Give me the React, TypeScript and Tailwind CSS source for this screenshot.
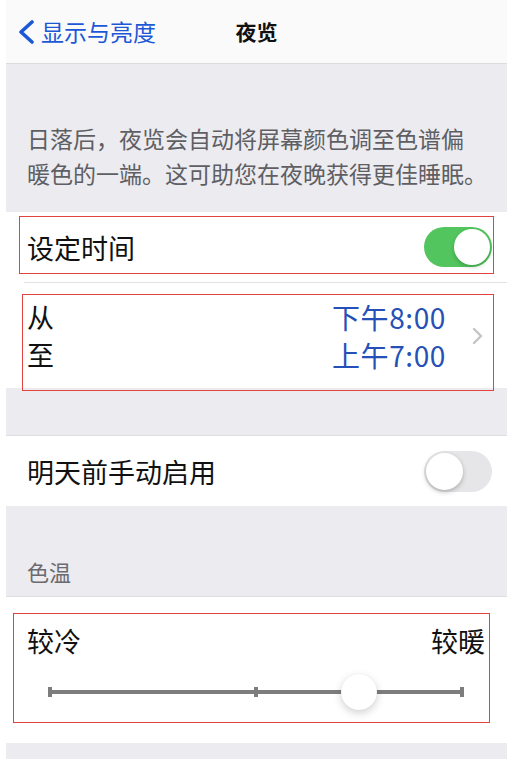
import React from "react";

function ToggleOn() {
  return (
    <div className="flex h-[40px] w-[68px] items-center justify-end rounded-full bg-[#52c55e] p-[2px]">
      <div className="h-[36px] w-[36px] rounded-full bg-white shadow-[0_2px_4px_rgba(0,0,0,0.2)]" />
    </div>
  );
}

function ToggleOff() {
  return (
    <div className="flex h-[41px] w-[68px] items-center justify-start rounded-full bg-[#e6e6e8] p-[2px]">
      <div className="h-[37px] w-[37px] rounded-full bg-white shadow-[0_2px_5px_rgba(0,0,0,0.25)]" />
    </div>
  );
}

export default function App() {
  return (
    <div className="flex h-[759px] w-[507px] overflow-hidden bg-white pl-[6px] font-['Noto_Sans_CJK_SC','Noto_Sans',sans-serif] text-[#111]">
      <div className="flex flex-1 flex-col bg-[#ebebf0]">
        {/* Nav bar */}
        <div className="grid h-[64px] grid-cols-[1fr_auto_1fr] items-center border-b border-[#dcdce0] bg-[#fafafa]">
          <div className="flex items-center pl-[11px] text-[#1c58d6]">
            <svg width="18" height="24" viewBox="0 0 18 24" className="mr-[6px]">
              <path d="M15 2 L4 12 L15 22" fill="none" stroke="#1c58d6" strokeWidth="3.6" strokeLinecap="round" strokeLinejoin="round" />
            </svg>
            <span className="text-[23px] leading-none">显示与亮度</span>
          </div>
          <div className="text-[21px] font-bold leading-none">夜览</div>
          <div />
        </div>

        {/* Description */}
        <div className="h-[148px] pl-[21px] pt-[57px] text-[23px] leading-[35px] text-[#5e5e63]">
          <div>日落后，夜览会自动将屏幕颜色调至色谱偏</div>
          <div>暖色的一端。这可助您在夜晚获得更佳睡眠。</div>
        </div>

        {/* Schedule section */}
        <div className="relative bg-white">
          <div className="flex h-[70px] items-center justify-between pl-[21px] pr-[15px]">
            <span className="text-[27px] leading-none">设定时间</span>
            <ToggleOn />
          </div>
          <div className="ml-[18px] h-px bg-[#e2e2e4]" />
          <div className="flex h-[105px] items-center pl-[21px] pr-[24px]">
            <div className="flex-1 text-[27px] leading-[38px]">
              <div>从</div>
              <div>至</div>
            </div>
            <div className="text-right text-[28px] leading-[38px] tracking-[0.6px] text-[#2450b8]">
              <div>下午8:00</div>
              <div>上午7:00</div>
            </div>
            <svg width="11" height="18" viewBox="0 0 11 18" className="ml-[26px]">
              <path d="M2 2 L9 9 L2 16" fill="none" stroke="#c4c4c8" strokeWidth="2.4" strokeLinecap="round" strokeLinejoin="round" />
            </svg>
          </div>
          <div className="pointer-events-none absolute left-[13px] top-[4px] h-[58px] w-[475px] border-[1.5px] border-[#e2433f]" />
          <div className="pointer-events-none absolute left-[16px] top-[82px] h-[97px] w-[472px] border-[1.5px] border-[#e2433f]" />
        </div>

        <div className="h-[48px] border-b border-[#dedee2]" />

        {/* Manual enable */}
        <div className="flex h-[70px] items-center justify-between bg-white pl-[21px] pr-[15px]">
          <span className="text-[27px] leading-none">明天前手动启用</span>
          <ToggleOff />
        </div>

        {/* Color temp header */}
        <div className="flex h-[91px] items-end border-b border-[#dedee2] pb-[10px] pl-[21px]">
          <span className="text-[22px] leading-[30px] text-[#6a6a6f]">色温</span>
        </div>

        {/* Slider */}
        <div className="relative h-[146px] bg-white">
          <div className="flex justify-between pl-[21px] pr-[22px] pt-[27px] text-[27px] leading-[34px]">
            <span>较冷</span>
            <span>较暖</span>
          </div>
          <div className="relative mt-[14px] h-[40px]">
            <svg width="501" height="40" viewBox="0 0 501 40" className="block">
              <line x1="44" y1="20" x2="456" y2="20" stroke="#7d7d7d" strokeWidth="4" />
              <rect x="42" y="15" width="4" height="10" fill="#7d7d7d" />
              <rect x="248" y="15" width="4" height="10" fill="#7d7d7d" />
              <rect x="454" y="15" width="4" height="10" fill="#7d7d7d" />
            </svg>
            <div className="absolute left-[335px] top-[2px] h-[36px] w-[36px] rounded-full bg-white shadow-[0_3px_8px_rgba(0,0,0,0.18),0_0_1px_rgba(0,0,0,0.1)]" />
          </div>
          <div className="pointer-events-none absolute left-[7px] top-[16px] h-[110px] w-[477px] border-[1.5px] border-[#e2433f]" />
        </div>

        <div className="flex-1" />
      </div>
    </div>
  );
}
